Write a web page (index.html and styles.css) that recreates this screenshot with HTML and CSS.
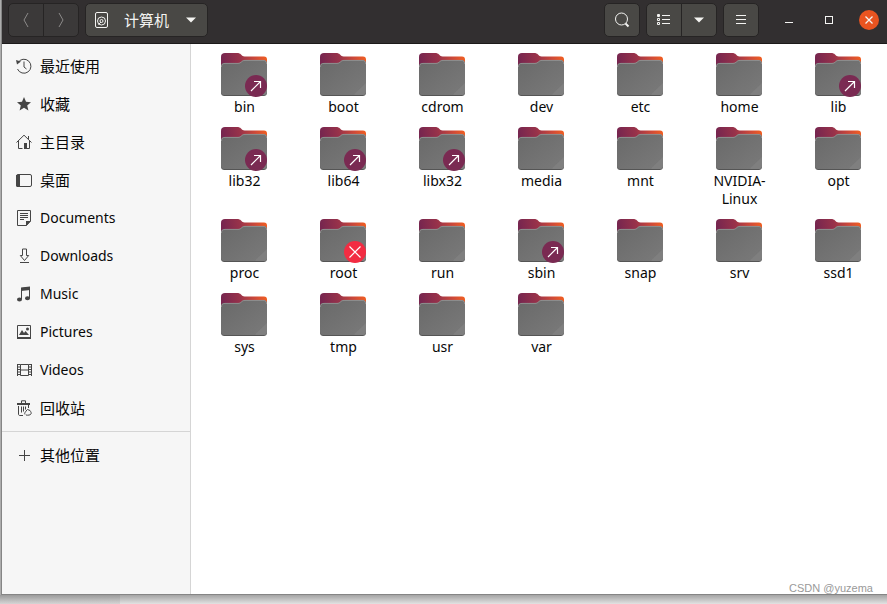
FILE: index.html
```html
<!DOCTYPE html>
<html lang="zh-CN">
<head>
<meta charset="utf-8">
<title>计算机</title>
<link rel="stylesheet" href="styles.css">
</head>
<body>
<svg class="defs" aria-hidden="true">
  <defs>
    <linearGradient id="back" gradientUnits="userSpaceOnUse" x1="2" y1="10" x2="45" y2="2"><stop offset="0" stop-color="#77264f"/><stop offset="0.4" stop-color="#98324a"/><stop offset="0.75" stop-color="#cf4a38"/><stop offset="1" stop-color="#f05e22"/></linearGradient>
    <linearGradient id="front" x1="0" y1="0" x2="1" y2="1"><stop offset="0" stop-color="#696969"/><stop offset="1" stop-color="#7a7a7a"/></linearGradient>
    <symbol id="folder" viewBox="0 0 46 44">
      <path fill="url(#back)" d="M4 0h12c2 0 3 .5 4 1.500l1 1c.8.700 1.500.900 2.500.900H43c2 0 3 1 3 3V20H0V4c0-3 1.500-4 4-4z"/>
      <path fill="#555" d="M0 14v25c0 3 1 4 4 4h38c3 0 4-1 4-4V14z"/>
      <path fill="url(#front)" d="M0 14c0-3 1-4 4-4h13c1.500 0 2.500-.5 3.500-1.500S22.500 7 24 7h18c3 0 4 1 4 4v27c0 3-1 4-4 4H4c-3 0-4-1-4-4z"/>
      <path fill="none" stroke="#989898" stroke-width=".8" d="M.5 14c0-2.500 1-3.600 3.500-3.600h13c1.500 0 2.500-.5 3.500-1.500S22.500 7.400 24 7.400h18c2.500 0 3.500 1 3.500 3.600"/>
      <path fill="#7f7f7f" d="M46 30v8c0 3-1 4-4 4h-7c-1 0-1-.5 0-1.500z"/>
    </symbol>
    <symbol id="link" viewBox="0 0 22 22"><circle cx="11" cy="11" r="11" fill="#7a2a52"/><path d="M6 16L15.500 6.500M9 6.500h6.500V13" fill="none" stroke="#fff" stroke-width="1.200"/></symbol>
    <symbol id="locked" viewBox="0 0 22 22"><circle cx="11" cy="11" r="11" fill="#f22c42"/><path d="M5.500 5.500l11 11M16.500 5.500l-11 11" fill="none" stroke="#fff" stroke-width="1.200"/></symbol>
  </defs>
</svg>

<div class="window">
  <header class="bar">
    <div class="group">
      <button class="btn off" aria-label="后退" disabled><svg width="16" height="16"><path d="M10 1L6 8l4 7"/></svg></button>
      <button class="btn off" aria-label="前进" disabled><svg width="16" height="16"><path d="M6 1l4 7-4 7"/></svg></button>
    </div>
    <button class="btn path">
      <svg width="16" height="16"><rect x="1.500" y=".5" width="12" height="15" rx="1.500"/><circle cx="7.500" cy="9" r="4"/><circle cx="7.500" cy="9" r="1.500"/><path d="M4.500 12.500L7 10"/></svg>
      <span>计算机</span>
      <svg width="10" height="6"><path class="solid" d="M0 .5h10L5 5.500z"/></svg>
    </button>
    <div class="tools">
      <button class="btn" aria-label="搜索"><svg width="16" height="16"><circle cx="7.500" cy="7" r="6"/><path stroke-width="2" d="M11.500 11.500l3 3"/></svg></button>
      <div class="group">
        <button class="btn" aria-label="列表视图"><svg width="14" height="12"><path d="M1.500.5v2m-1-2h2v2h-2zm0 4h2v2h-2zm0 4h2v2h-2zM5 1.500h8M5 5.500h8M5 9.500h8"/></svg></button>
        <button class="btn" aria-label="视图选项"><svg width="10" height="6"><path class="solid" d="M0 .5h10L5 5.500z"/></svg></button>
      </div>
      <button class="btn" aria-label="菜单"><svg width="10" height="10"><path d="M0 .5h10M0 4.500h10M0 8.500h10"/></svg></button>
    </div>
    <div class="controls">
      <button class="ctl" aria-label="最小化"><svg width="8" height="8"><path d="M0 6.500h8"/></svg></button>
      <button class="ctl" aria-label="最大化"><svg width="8" height="8"><rect x=".5" y=".5" width="7" height="7"/></svg></button>
      <button class="ctl close" aria-label="关闭"><svg width="8" height="8"><path stroke-width="1.300" d="M.5.5l7 7M7.500.5l-7 7"/></svg></button>
    </div>
  </header>

  <div class="body">
    <nav class="places">
      <a href="#"><svg width="16" height="16"><path d="M2 4.500A7 7 0 1 1 1.500 11M8 3.500V9l2.500 2"/><path class="solid" d="M0 2l5 1.500-4 3z"/></svg>最近使用</a>
      <a href="#"><svg width="16" height="16"><path class="solid" d="M8 1l2 4.800 5 .4-3.800 3.300 1.200 5L8 11.800l-4.400 2.700 1.200-5L1 6.200l5-.4z"/></svg>收藏</a>
      <a href="#"><svg width="16" height="16"><path d="M.5 8.500L8 1.200l7.500 7.300M2.500 7v7.500h4M13.500 7v7.500H11M12.500 2v3"/><path class="solid" d="M8 9h3v6H8z"/></svg>主目录</a>
      <a href="#"><svg width="16" height="16"><rect x=".5" y="2.500" width="15" height="12" rx="1.500"/><path class="solid" d="M0 3h4v12H1L0 14z"/></svg>桌面</a>
      <a href="#" class="latin"><svg width="16" height="16"><path d="M1.500.5h13V11l-4 4.500h-9zM4 3.500h8M4 5.500h8M4 7.500h8M4 9.500h4"/><path class="solid" d="M10 11h5l-5 5z"/></svg>Documents</a>
      <a href="#" class="latin"><svg width="16" height="16"><path d="M6.500 1h4v6.500h2.200L8.500 12.500 4.300 7.500h2.200zM4 14.500h9"/></svg>Downloads</a>
      <a href="#" class="latin"><svg width="16" height="16"><path d="M5.500 13V2.500l8-1V12"/><path class="solid" d="M5 1.500L14 .5V4L5 5z"/><ellipse class="solid" cx="3.500" cy="13.500" rx="2.500" ry="2"/><ellipse class="solid" cx="11.500" cy="12.300" rx="2.500" ry="2"/></svg>Music</a>
      <a href="#" class="latin"><svg width="16" height="16"><path d="M1.500 1.500h13v12h-13z"/><path class="solid" d="M1 13h14v2H1zM3 11l3-5 2 3 1.500-2L13 11z"/><circle class="solid" cx="11.500" cy="5" r="1.500"/></svg>Pictures</a>
      <a href="#" class="latin"><svg width="16" height="16"><path d="M4.500 2.500h8v11h-8zM4.500 8h8M1.500 2v12M15.500 2v12"/><path d="M3 2v12M14 2v12" stroke-width="3" stroke-dasharray="1 1.500"/></svg>Videos</a>
      <a href="#"><svg width="16" height="16"><path d="M1 3.500h13M5.500 3V.8h4V3M2.500 6v8c0 1 .5 1.500 1.500 1.500h3M5.500 6.500v6M7.500 6.500v5M9.500 6.500v3M12.500 5v3M9 14.500c-.8-1 .2-2.500 1.200-3.500M14 10.500c1 1.500 1.500 2.500 1 3.500s-3 1.500-5 1M10 11l1.500-1.500L14 10.500"/><path class="solid" d="M1 3h13v2H1z"/></svg>回收站</a>
      <hr>
      <a href="#"><svg width="16" height="16"><path d="M3 8.500h11M8.500 3v11"/></svg>其他位置</a>
    </nav>

    <main class="files">
      <button class="file"><span class="icon"><svg><use href="#folder"/></svg><svg class="emblem"><use href="#link"/></svg></span>bin</button>
      <button class="file"><span class="icon"><svg><use href="#folder"/></svg></span>boot</button>
      <button class="file"><span class="icon"><svg><use href="#folder"/></svg></span>cdrom</button>
      <button class="file"><span class="icon"><svg><use href="#folder"/></svg></span>dev</button>
      <button class="file"><span class="icon"><svg><use href="#folder"/></svg></span>etc</button>
      <button class="file"><span class="icon"><svg><use href="#folder"/></svg></span>home</button>
      <button class="file"><span class="icon"><svg><use href="#folder"/></svg><svg class="emblem"><use href="#link"/></svg></span>lib</button>
      <button class="file"><span class="icon"><svg><use href="#folder"/></svg><svg class="emblem"><use href="#link"/></svg></span>lib32</button>
      <button class="file"><span class="icon"><svg><use href="#folder"/></svg><svg class="emblem"><use href="#link"/></svg></span>lib64</button>
      <button class="file"><span class="icon"><svg><use href="#folder"/></svg><svg class="emblem"><use href="#link"/></svg></span>libx32</button>
      <button class="file"><span class="icon"><svg><use href="#folder"/></svg></span>media</button>
      <button class="file"><span class="icon"><svg><use href="#folder"/></svg></span>mnt</button>
      <button class="file"><span class="icon"><svg><use href="#folder"/></svg></span>NVIDIA-<br>Linux</button>
      <button class="file"><span class="icon"><svg><use href="#folder"/></svg></span>opt</button>
      <button class="file"><span class="icon"><svg><use href="#folder"/></svg></span>proc</button>
      <button class="file"><span class="icon"><svg><use href="#folder"/></svg><svg class="emblem"><use href="#locked"/></svg></span>root</button>
      <button class="file"><span class="icon"><svg><use href="#folder"/></svg></span>run</button>
      <button class="file"><span class="icon"><svg><use href="#folder"/></svg><svg class="emblem"><use href="#link"/></svg></span>sbin</button>
      <button class="file"><span class="icon"><svg><use href="#folder"/></svg></span>snap</button>
      <button class="file"><span class="icon"><svg><use href="#folder"/></svg></span>srv</button>
      <button class="file"><span class="icon"><svg><use href="#folder"/></svg></span>ssd1</button>
      <button class="file"><span class="icon"><svg><use href="#folder"/></svg></span>sys</button>
      <button class="file"><span class="icon"><svg><use href="#folder"/></svg></span>tmp</button>
      <button class="file"><span class="icon"><svg><use href="#folder"/></svg></span>usr</button>
      <button class="file"><span class="icon"><svg><use href="#folder"/></svg></span>var</button>
    </main>
  </div>
</div>
<div class="watermark">CSDN @yuzema</div>
</body>
</html>
```
FILE: styles.css
```css
* {
  box-sizing: border-box;
}

body {
  margin: 0;
  height: 100vh;
  padding: 0 0 9px 1px;
  overflow: hidden;
  background:
    linear-gradient(90deg, rgba(0, 0, 0, 0.06) 120px, transparent 120px),
    linear-gradient(#a4a4a4, #e2e2e2) bottom / 100% 9px no-repeat,
    #b8b8b8;
  font: 15px/18px "Noto Sans", "Noto Sans CJK SC", sans-serif;
  color: #080808;
}

button {
  font: inherit;
  color: inherit;
  padding: 0;
  border: 0;
  background: none;
}

svg {
  display: block;
  flex: none;
  fill: none;
  stroke: currentColor;
}

.solid {
  fill: currentColor;
  stroke: none;
}

.defs {
  position: absolute;
  width: 0;
  height: 0;
}

.window {
  height: 100%;
  display: flex;
  flex-direction: column;
  border: solid #858585;
  border-width: 0 0 1px 1px;
  background: #fff;
}

.bar {
  display: flex;
  align-items: center;
  height: 44px;
  padding: 0 8px 4px 6px;
  background: #322f30;
  border-bottom: 1px solid #1c1a1a;
  color: #f4f4f2;
}

.group {
  display: flex;
}

.btn {
  display: flex;
  align-items: center;
  justify-content: center;
  width: 36px;
  height: 34px;
  border: 1px solid #262424;
  border-radius: 5px;
  background: #494845;
}

.group .btn:first-child {
  border-radius: 5px 0 0 5px;
}

.group .btn:last-child {
  border-radius: 0 5px 5px 0;
  margin-left: -1px;
}

.btn.off {
  background: #3b3939;
  color: #8c8a89;
}

.path {
  justify-content: flex-start;
  width: 123px;
  margin-left: 6px;
  padding-left: 8px;
  gap: 14px;
}

.path span {
  padding-right: 3px;
}

.tools {
  display: flex;
  gap: 6px;
  margin-left: auto;
}

.controls {
  display: flex;
  gap: 20px;
  margin-left: 20px;
}

.ctl {
  display: grid;
  place-items: center;
  width: 20px;
  height: 20px;
  border-radius: 50%;
}

.close {
  background: #e95420;
}

.body {
  flex: 1;
  display: flex;
  min-height: 0;
}

.places {
  flex: none;
  width: 189px;
  padding-top: 3px;
  background: #f6f6f6;
  border-right: 1px solid #d5d5d5;
}

.places a {
  display: flex;
  align-items: center;
  gap: 8px;
  height: 38px;
  padding-left: 14px;
  color: inherit;
  text-decoration: none;
}

.places .latin {
  font-size: 14px;
}

.places svg {
  color: #454545;
}

.places hr {
  margin: 4px 0;
  border: 0;
  border-top: 1px solid #d5d5d5;
}

.files {
  flex: 1;
  display: grid;
  grid-template-columns: repeat(7, minmax(99px, 1fr));
  align-content: start;
  row-gap: 10px;
  padding: 9px 0 0 4px;
  overflow: hidden;
  font-size: 14px;
}

.file {
  display: block;
  align-self: start;
  padding-bottom: 1px;
  text-align: center;
}

.icon {
  display: block;
  position: relative;
  width: 47px;
  margin: 0 auto 1px;
}

.icon svg {
  width: 46px;
  height: 44px;
  stroke: none;
}

.icon .emblem {
  position: absolute;
  right: 1px;
  bottom: 0;
  width: 22px;
  height: 22px;
}

.watermark {
  position: absolute;
  right: 14px;
  bottom: 8px;
  font: 11px/16px "Liberation Sans", sans-serif;
  color: #999;
}
```
